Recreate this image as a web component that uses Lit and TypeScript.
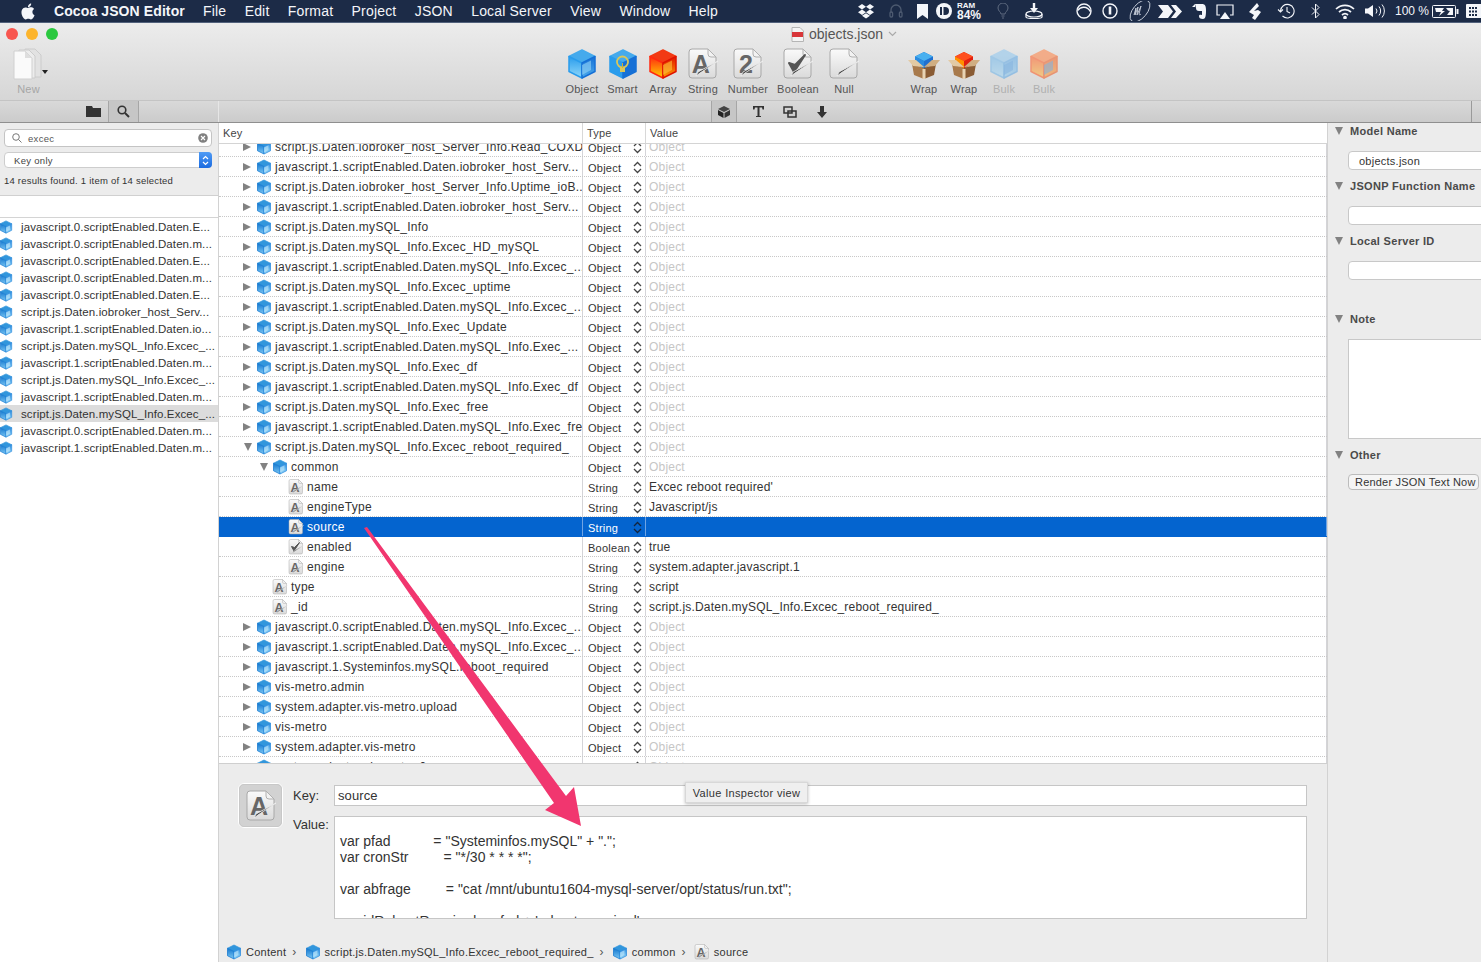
import { LitElement, html, css, svg } from "lit";
import { customElement } from "lit/decorators.js";

let uid = 0;
function cube(size: number, top = "#45aaec", left = "#2a9cec", leftB = "#8fd8fa", right = "#1670d6", rightB = "#4cabec", inner = "#9fdcfa") {
  const id = "c" + uid++;
  return html`<svg class="ic" width=${size} height=${size} viewBox="0 0 32 32">
    <defs>
      <linearGradient id="${id}l" x1="0" y1="0" x2="0" y2="1"><stop offset="0" stop-color=${left}/><stop offset="1" stop-color=${leftB}/></linearGradient>
      <linearGradient id="${id}r" x1="0" y1="0" x2="0" y2="1"><stop offset="0" stop-color=${right}/><stop offset="1" stop-color=${rightB}/></linearGradient>
    </defs>
    <g stroke-linejoin="round" stroke-width="1.500">
      <polygon points="16,2 29,8.500 16,15 3,8.500" fill=${top} stroke=${top}/>
      <polygon points="3,8.500 16,15 16,30 3,23.500" fill="url(#${id}l)" stroke=${left}/>
      <polygon points="29,8.500 16,15 16,30 29,23.500" fill="url(#${id}r)" stroke=${right}/>
    </g>
    <polygon points="16,17 25,12.500 25,22 16,27" fill=${inner} opacity=".55"/>
  </svg>`;
}
const rowCube = () => cube(16, "#3196dc", "#1377cf", "#7cc8f4", "#2a8ade", "#9adcfa", "#d2f2ff");

function docIcon(size: number, glyph: string, pen = true) {
  const id = "d" + uid++;
  return html`<svg class="ic" width=${size} height=${size} viewBox="0 0 32 32">
    <defs><linearGradient id=${id} x1="0" y1="0" x2="0" y2="1"><stop offset="0" stop-color="#fafafa"/><stop offset="1" stop-color="#dadada"/></linearGradient></defs>
    <path d="M5 1h16l8 8v18a3 3 0 0 1-3 3H5a3 3 0 0 1-3-3V4a3 3 0 0 1 3-3z" fill="url(#${id})" stroke="#a8a8a8" stroke-width="1"/>
    <path d="M21 1v5a3 3 0 0 0 3 3h5z" fill="#f2f2f2" stroke="#b0b0b0" stroke-width="1"/>
    ${glyph === "check"
      ? svg`<path d="M7 15l5 9 11-17-10 10z" fill="#555" stroke="#555" stroke-width="2" stroke-linejoin="round"/>`
      : glyph
      ? svg`<text x="14" y="25" text-anchor="middle" font-family="Liberation Sans, sans-serif" font-weight="700" font-size="25" fill="#666">${glyph}</text>`
      : ""}
    ${pen ? svg`<path d="M31 13L13 25l-4 3 2-4z" fill="#3c3c3c" stroke="#f2f2f2" stroke-width=".8"/>` : ""}
  </svg>`;
}

function boxIcon(top: string, side1: string, side2: string) {
  return html`<svg class="ic" width="32" height="32" viewBox="0 0 32 32">
    <polygon points="16,4 25,8.500 25,16 16,20.500 7,16 7,8.500" fill=${side2}/>
    <polygon points="16,4 25,8.500 16,13 7,8.500" fill=${top}/>
    <polygon points="7,8.500 16,13 16,20.500 7,16" fill=${side1}/>
    <polygon points="4,16 16,20 16,31 6,27" fill="#a87a4c"/>
    <polygon points="28,16 16,20 16,31 26,27" fill="#8a5c34"/>
    <polygon points="0,12 8,12 16,19 5,18" fill="#e2caa4"/>
    <polygon points="32,12 24,12 16,19 27,18" fill="#d0ae82"/>
    <rect x="14.500" y="21" width="3" height="10" fill="#e8d4b4"/>
  </svg>`;
}

const w = "#f4f6fa";
const mi = {
  dropbox: html`<svg width="16" height="15" viewBox="0 0 16 15" fill=${w}><path d="M4 0L0 2.800l4 2.700 4-2.700zM12 0L8 2.800l4 2.700 4-2.700zM0 8.200L4 11l4-2.800-4-2.700zM12 5.500L8 8.200l4 2.800 4-2.800zM4 11.800l4 2.800 4-2.800-4-2.600z"/></svg>`,
  phones: html`<svg width="14" height="16" viewBox="0 0 14 16" fill="none" stroke="#4d5a70" stroke-width="1.300"><path d="M2 10V7a5 5 0 0 1 10 0v3"/><rect x="1" y="9" width="2.600" height="5" rx="1"/><rect x="10.400" y="9" width="2.600" height="5" rx="1"/></svg>`,
  mark: html`<svg width="11" height="15" viewBox="0 0 11 15" fill=${w}><path d="M0 0h11v15l-5.500-4L0 15z"/></svg>`,
  circleD: html`<svg width="16" height="16" viewBox="0 0 16 16"><circle cx="8" cy="8" r="8" fill=${w}/><rect x="4" y="4" width="2" height="8" fill="#1c2b47"/><path d="M7.500 4H9a4 4 0 0 1 0 8H7.500z" fill="#1c2b47"/></svg>`,
  bulb: html`<svg width="12" height="16" viewBox="0 0 12 16" fill="none" stroke="#5f6b80"><path d="M4 11c0-2-3-3-3-6a5 5 0 0 1 10 0c0 3-3 4-3 6z"/><path d="M4.500 13h3M5 15h2"/></svg>`,
  tray: html`<svg width="18" height="18" viewBox="0 0 18 18" fill="none" stroke=${w} stroke-width="1.200"><path d="M9 1v7" stroke-width="2.400"/><path d="M5 6h8l-4 5z" fill=${w} stroke="none"/><ellipse cx="9" cy="12" rx="8" ry="3"/><path d="M1 12v3c0 2 16 2 16 0v-3"/></svg>`,
  circ: html`<svg width="16" height="16" viewBox="0 0 16 16" fill="none" stroke=${w} stroke-width="1.400"><circle cx="8" cy="8" r="7"/><path d="M1.500 7.500C5 3 11 3 14.500 8.500"/></svg>`,
  circI: html`<svg width="16" height="16" viewBox="0 0 16 16" fill="none" stroke=${w} stroke-width="1.400"><circle cx="8" cy="8" r="7"/><path d="M8 3.500v8" stroke-width="2.600"/></svg>`,
  m: html`<svg width="26" height="20" viewBox="0 0 26 20" fill="none" stroke="#c8cfdb" stroke-width=".9"><ellipse cx="13" cy="10" rx="13" ry="7" transform="rotate(-50 13 10)"/><path d="M7 14l2-7-1 7 3-8-1 8 4-9-2 8c0 1 1 1 2 0"/></svg>`,
  arrows: html`<svg width="24" height="13" viewBox="0 0 24 13" fill=${w}><path d="M0 0h10l5 6.500-5 6.500H0l5-6.500zM13 0h5l6 6.500-6 6.500h-5l5-6.500z"/></svg>`,
  ever: html`<svg width="14" height="17" viewBox="0 0 14 17" fill=${w}><path d="M3 1h7c3 0 4 2 4 6s0 9-3 9-4-1-4-3 3-1 3-1V8H7c-2 0-3-1-3-3zM0 4l3-3v3z"/></svg>`,
  airplay: html`<svg width="18" height="15" viewBox="0 0 18 15" fill="none" stroke=${w} stroke-width="1.200"><path d="M4 11H1V1h16v10h-3"/><path d="M9 8l5 7H4z" fill=${w} stroke="none"/></svg>`,
  leaf: html`<svg width="12" height="17" viewBox="0 0 12 17" fill=${w}><path d="M8 0l2 3-5 5 4-1 3 2-6 8-3-2 2-3-5-3z"/></svg>`,
  clock: html`<svg width="18" height="16" viewBox="0 0 18 16" fill="none" stroke=${w} stroke-width="1.100"><path d="M3.500 8a6.800 6.800 0 1 1 2 5"/><path d="M10 4v4.500l3 1.500M1 6.500l2.500 2.500L6 6.500"/></svg>`,
  bt: html`<svg width="9" height="16" viewBox="0 0 9 16" fill="none" stroke=${w} stroke-width="1"><path d="M1 4.500l7 7-3.500 3.500V1L8 4.500l-7 7"/></svg>`,
  wifi: html`<svg width="20" height="15" viewBox="0 0 20 15" fill="none" stroke=${w} stroke-width="1.700"><path d="M1 5a13 13 0 0 1 18 0M4 8a9 9 0 0 1 12 0M7 11a4.500 4.500 0 0 1 6 0"/><circle cx="10" cy="13.500" r="1" fill=${w}/></svg>`,
  vol: html`<svg width="21" height="14" viewBox="0 0 21 14" fill="none" stroke=${w} stroke-width="1"><path d="M0 4.500h3L8 1v12L3 9.500H0z" fill=${w} stroke="none"/><path d="M11 4.500a4 4 0 0 1 0 5M14 2.500a7 7 0 0 1 0 9M17 .5a10 10 0 0 1 0 13"/></svg>`,
  batt: html`<svg width="27" height="13" viewBox="0 0 27 13" fill="none" stroke=${w}><rect x=".5" y=".5" width="23" height="12" rx="1"/><rect x="24.500" y="4" width="2" height="5" fill=${w} stroke="none"/><path d="M3 3h9l-2 3h3l-6 5 2-4H4zM14 3h7v7h-6l3-4-2-.5z" fill=${w} stroke="none"/></svg>`,
  grid: html`<svg width="15" height="14" viewBox="0 0 15 14" fill=${w}><path d="M0 1a1 1 0 0 1 1-1h14v14H1a1 1 0 0 1-1-1zm3 2v2h2V3zm3 0v2h2V3zm3 0v2h2V3zM3 6.500v2h2v-2zm3 0v2h2v-2zm3 0v2h2v-2zM3 10v2h2v-2zm3 0v2h2v-2zm3 0v2h2v-2z" fill-rule="evenodd"/></svg>`,
};

const stepper = html`<svg class="step" width="9" height="13" viewBox="0 0 9 13" fill="none" stroke="currentColor" stroke-width="1.300"><path d="M1 5l3.500-3.500L8 5M1 8l3.500 3.500L8 8"/></svg>`;

interface Row { k: string; d: number; t: string; v: string; icon: string; tri?: string; sel?: boolean }
const obj = (k: string, tri = "tr", d = 0): Row => ({ k, d, t: "Object", v: "Object", icon: "o", tri });
const str = (k: string, v: string, d: number, sel = false): Row => ({ k, d, t: "String", v, icon: "A", sel });

const rows: Row[] = [
  obj("script.js.Daten.iobroker_host_Server_Info.Read_COXD"),
  obj("javascript.1.scriptEnabled.Daten.iobroker_host_Serv..."),
  obj("script.js.Daten.iobroker_host_Server_Info.Uptime_ioB..."),
  obj("javascript.1.scriptEnabled.Daten.iobroker_host_Serv..."),
  obj("script.js.Daten.mySQL_Info"),
  obj("script.js.Daten.mySQL_Info.Excec_HD_mySQL"),
  obj("javascript.1.scriptEnabled.Daten.mySQL_Info.Excec_..."),
  obj("script.js.Daten.mySQL_Info.Excec_uptime"),
  obj("javascript.1.scriptEnabled.Daten.mySQL_Info.Excec_..."),
  obj("script.js.Daten.mySQL_Info.Exec_Update"),
  obj("javascript.1.scriptEnabled.Daten.mySQL_Info.Exec_..."),
  obj("script.js.Daten.mySQL_Info.Exec_df"),
  obj("javascript.1.scriptEnabled.Daten.mySQL_Info.Exec_df"),
  obj("script.js.Daten.mySQL_Info.Exec_free"),
  obj("javascript.1.scriptEnabled.Daten.mySQL_Info.Exec_free"),
  obj("script.js.Daten.mySQL_Info.Excec_reboot_required_", "td"),
  obj("common", "td", 1),
  str("name", "Excec reboot required'", 2),
  str("engineType", "Javascript/js", 2),
  str("source", "", 2, true),
  { k: "enabled", d: 2, t: "Boolean", v: "true", icon: "b" },
  str("engine", "system.adapter.javascript.1", 2),
  str("type", "script", 1),
  str("_id", "script.js.Daten.mySQL_Info.Excec_reboot_required_", 1),
  obj("javascript.0.scriptEnabled.Daten.mySQL_Info.Excec_..."),
  obj("javascript.1.scriptEnabled.Daten.mySQL_Info.Excec_..."),
  obj("javascript.1.Systeminfos.mySQL.reboot_required"),
  obj("vis-metro.admin"),
  obj("system.adapter.vis-metro.upload"),
  obj("vis-metro"),
  obj("system.adapter.vis-metro"),
  obj("system.adapter.vis-metro.0"),
];

const results = [
  "javascript.0.scriptEnabled.Daten.E...",
  "javascript.0.scriptEnabled.Daten.m...",
  "javascript.0.scriptEnabled.Daten.E...",
  "javascript.0.scriptEnabled.Daten.m...",
  "javascript.0.scriptEnabled.Daten.E...",
  "script.js.Daten.iobroker_host_Serv...",
  "javascript.1.scriptEnabled.Daten.io...",
  "script.js.Daten.mySQL_Info.Excec_...",
  "javascript.1.scriptEnabled.Daten.m...",
  "script.js.Daten.mySQL_Info.Excec_...",
  "javascript.1.scriptEnabled.Daten.m...",
  "script.js.Daten.mySQL_Info.Excec_...",
  "javascript.0.scriptEnabled.Daten.m...",
  "javascript.1.scriptEnabled.Daten.m...",
];

const menus = ["File", "Edit", "Format", "Project", "JSON", "Local Server", "View", "Window", "Help"];

const trayA: [number, any][] = [[30, mi.dropbox], [30, mi.phones], [22, mi.mark], [22, mi.circleD]];
const trayB: [number, any][] = [[26, mi.bulb], [36, mi.tray]];
const trayC: [number, any][] = [
  [18, mi.circ], [34, mi.circI], [26, mi.m], [34, mi.arrows], [24, mi.ever], [28, mi.airplay],
  [31, mi.leaf], [31, mi.clock], [28, mi.bt], [32, mi.wifi], [28, mi.vol],
];

@customElement("app-root")
export class AppRoot extends LitElement {
  static styles = css`
    :host { display: block; position: relative; width: 1481px; height: 962px; overflow: hidden;
      font-family: "Liberation Sans", Arial, sans-serif; font-size: 12px; color: #333; background: #ececec; }
    .ic { flex: none; display: block; }
    .menubar { height: 22px; background: #1c2b47; border-bottom: 1px solid #52627c; display: flex; align-items: center; color: #f4f6fa; font-size: 14px; letter-spacing: .17px; white-space: nowrap; }
    .apple { width: 16px; height: 17px; margin-left: 20px; fill: #f4f6fa; flex: none; }
    .appname { font-weight: 700; margin-left: 18px; margin-right: 18px; width: 131px; letter-spacing: .1px; flex: none; }
    .menus { display: flex; gap: 18.400px; }
    .tray { margin-left: auto; display: flex; align-items: center; height: 22px; letter-spacing: 0; }
    .cell { display: flex; align-items: center; justify-content: center; flex: none; }
    .ram { width: 33px; font-weight: 700; font-size: 12px; margin-left: 2px; display: flex; flex-direction: column; flex: none; }
    .ram small { font-size: 8px; line-height: 8px; display: block; }
    .ram b { line-height: 10px; display: block; }
    .pct { font-size: 12px; width: 36px; text-align: center; margin-left: 5px; flex: none; }
    .spacer2 { width: 23px; flex: none; }
    .gridcell { width: 15px; margin-left: 6px; }

    .toolbar { height: 77px; background: linear-gradient(#ececec, #d6d6d6); display: flex; flex-direction: column; position: relative; }
    .lights { display: flex; gap: 8px; padding: 5px 0 0 6px; height: 12px; }
    .lights i { width: 12px; height: 12px; border-radius: 50%; }
    .lr { background: #f8564f; } .ly { background: #fcb42c; } .lg { background: #2ac83f; }
    .title { position: absolute; left: 0; right: 0; top: 3px; display: flex; justify-content: center; align-items: center; gap: 5px; font-size: 14px; color: #555; padding-left: 207px; height: 16px; }
    .tools { display: flex; align-items: flex-start; padding-top: 8px; }
    .new { width: 57px; display: flex; flex-direction: column; align-items: center; color: #a6a6a6; font-size: 11px; letter-spacing: .2px; position: relative; flex: none; }
    .new span { margin-top: 3px; height: 13px; line-height: 13px; }
    .caret { position: absolute; left: 42px; top: 22px; border: 3px solid transparent; border-top: 4px solid #222; }
    .gap1 { width: 505px; flex: none; }
    .gap2 { width: 39px; flex: none; }
    .tool { display: flex; flex-direction: column; align-items: center; flex: none; font-size: 11px; color: #555; letter-spacing: .2px; }
    .tool span { margin-top: 3px; height: 13px; line-height: 13px; white-space: nowrap; }
    .tool.off { color: #b0b0b0; }
    .tool.off .ic { opacity: .55; }

    .tabs { height: 23px; background: linear-gradient(#d9d9d9, #cbcbcb); border-top: 1px solid #c4c4c4; border-bottom: 1px solid #8f8f8f; box-sizing: border-box; display: flex; }
    .tabL { width: 219px; box-sizing: border-box; border-right: 1px solid #e6e6e6; display: flex; justify-content: flex-end; padding-right: 79px; }
    .tabC { flex: 1; display: flex; padding-left: 492px; }
    .tabR { width: 9px; border-left: 1px solid #9a9a9a; }
    .tb { display: flex; align-items: center; justify-content: center; height: 21px; box-sizing: border-box; flex: none; }
    .tb.sepb { border-left: 1px solid #a6a6a6; border-right: 1px solid #a6a6a6; background: #c6c6c6; }
    .tb.fold { width: 30px; }
    .tb.srch { width: 31px; }
    .tb.c1 { width: 26px; }
    .tb.c2 { width: 43px; }
    .tb.c3 { width: 19px; }
    .tb.c4 { width: 45px; }

    .main { display: flex; height: 839px; }
    .side { width: 219px; box-sizing: border-box; border-right: 1px solid #d2d2d2; background: #fff; flex: none; display: flex; flex-direction: column; }
    .filter { height: 73px; box-sizing: border-box; background: #ececec; border-bottom: 1px solid #d0d0d0; padding: 6px 6px 0 4px; display: flex; flex-direction: column; }
    .search { height: 18px; box-sizing: border-box; border: 1px solid #c4c4c4; border-radius: 4px; background: #fff; display: flex; align-items: center; padding: 0 3px 0 7px; font-size: 9.500px; letter-spacing: .3px; color: #555; }
    .search b { font-weight: 400; margin-left: 6px; flex: 1; }
    .popup { height: 16px; box-sizing: border-box; margin-top: 5px; border: 1px solid #cdcdcd; border-radius: 4px; background: #fff; display: flex; align-items: center; padding-left: 9px; font-size: 9.500px; letter-spacing: .3px; color: #444; position: relative; }
    .popup i { position: absolute; right: -1px; top: -1px; width: 13px; height: 16px; border-radius: 0 4px 4px 0; background: linear-gradient(#4f9bf5, #1b6be0); display: flex; align-items: center; justify-content: center; color: #fff; }
    .count { font-size: 9.500px; letter-spacing: .22px; margin: 7px 0 0 0; color: #333; white-space: nowrap; }
    .gapw { height: 22px; border-bottom: 1px solid #d4d4d4; box-sizing: border-box; }
    .res { height: 17px; display: flex; align-items: center; gap: 8px; font-size: 11.500px; letter-spacing: .1px; white-space: nowrap; color: #333; overflow: hidden; }
    .res .ic { margin-left: -1px; }
    .res.hl { background: #dcdcdc; }

    .center { flex: 1; display: flex; flex-direction: column; min-width: 0; }
    .thead { height: 21px; box-sizing: border-box; background: #fff; border-bottom: 1px solid #d4d4d4; display: grid; grid-template-columns: 364px 63px 1fr; font-size: 11px; letter-spacing: .2px; color: #444; position: relative; z-index: 1; flex: none; }
    .thead div { padding-left: 4px; display: flex; align-items: center; border-right: 1px solid #d8d8d8; }
    .thead .last { border: 0; }
    .tbody { height: 619px; overflow: hidden; background: #fff; flex: none; }
    .rowsw { margin-top: -7px; }
    .row { height: 20px; box-sizing: border-box; border-bottom: 1px dotted #c8c8c8; display: grid; grid-template-columns: 364px 63px 1fr; }
    .row > div { display: flex; align-items: center; border-right: 1px solid #d4d4d8; min-width: 0; white-space: nowrap; overflow: hidden; }
    .key { font-size: 12px; letter-spacing: .28px; gap: 3px; color: #333; }
    .indent { flex: none; display: flex; justify-content: flex-end; }
    .tr { width: 0; height: 0; flex: none; border-left: 8px solid #828282; border-top: 4.500px solid transparent; border-bottom: 4.500px solid transparent; margin-right: 2px; }
    .td { width: 0; height: 0; flex: none; border-top: 8px solid #828282; border-left: 4.500px solid transparent; border-right: 4.500px solid transparent; margin-right: 1px; }
    .type { font-size: 11px; letter-spacing: .25px; padding-left: 5px; padding-top: 2px; box-sizing: border-box; justify-content: space-between; padding-right: 3px; color: #333; }
    .step { color: #444; flex: none; margin-top: -1px; }
    .val { font-size: 12px; padding-left: 3px; color: #333; letter-spacing: .2px; }
    .val.dim { color: #c6c6c6; }
    .row.sel { background: #0464cf; border-bottom-color: #0464cf; }
    .row.sel .key, .row.sel .type { color: #fff; }
    .row.sel > div { border-right-color: #6fa4e4; }
    .row.sel .step { color: #12243e; }

    .detail { flex: 1; border-top: 1px solid #cfcfcf; background: #ececec; display: flex; flex-direction: column; padding: 19px 20px 0 19px; position: relative; min-height: 0; }
    .dgrid { display: flex; gap: 10px; }
    .well { width: 45px; height: 45px; box-sizing: border-box; border: 1px solid #fff; outline: 1px solid #c8c8c8; outline-offset: -2px; border-radius: 6px; background: #d2d2d2; display: flex; align-items: center; justify-content: center; flex: none; }
    .form { flex: 1; display: grid; grid-template-columns: 41px 1fr; row-gap: 10px; padding-top: 2px; }
    .lbl { font-size: 13px; color: #333; }
    .lk { align-self: center; }
    .lv { padding-top: 1px; }
    .ki { height: 21px; box-sizing: border-box; border: 1px solid #c6c6c6; background: #fff; padding-left: 3px; display: flex; align-items: center; font-size: 13px; letter-spacing: .1px; }
    .vi { height: 103px; box-sizing: border-box; border: 1px solid #c6c6c6; background: #fff; padding: 16px 0 0 5px; overflow: hidden; font-size: 14px; line-height: 16px; white-space: pre; }
    .tip { position: absolute; left: 466px; top: 18px; width: 123px; height: 21px; box-sizing: border-box; background: #efefef; border: 1px solid #d8d8d8; box-shadow: 0 1px 3px rgba(0,0,0,.25); font-size: 11px; letter-spacing: .35px; display: flex; align-items: center; justify-content: center; color: #333; }
    .crumbs { margin-top: 25px; margin-left: -12px; display: flex; align-items: center; font-size: 11px; letter-spacing: .25px; height: 16px; white-space: nowrap; }
    .crumbs span { margin-left: 4px; }
    .crumbs em { font-style: normal; color: #555; margin: 0 8px 0 6px; font-size: 12px; }

    .right { width: 154px; flex: none; border-left: 1px solid #d2d2d2; box-sizing: border-box; background: #ececec; padding: 0 0 0 7px; display: flex; flex-direction: column; overflow: hidden; }
    .sec { display: flex; align-items: center; gap: 7px; font-weight: 700; font-size: 11px; color: #4a4a4a; height: 16px; white-space: nowrap; letter-spacing: .3px; flex: none; }
    .sec i { border-top: 8px solid #828282; border-left: 4.500px solid transparent; border-right: 4.500px solid transparent; flex: none; }
    .field { height: 19px; box-sizing: border-box; width: 150px; margin-left: 13px; border: 1px solid #c8c8c8; border-radius: 4px 0 0 4px; background: #fff; padding-left: 10px; display: flex; align-items: center; font-size: 11px; letter-spacing: .25px; flex: none; }
    .note { height: 100px; box-sizing: border-box; width: 150px; margin-left: 13px; border: 1px solid #c8c8c8; background: #fff; flex: none; }
    .btn { height: 16px; box-sizing: border-box; width: 131px; margin-left: 13px; border: 1px solid #bcbcbc; border-radius: 4px; background: #f5f5f5; font-size: 11px; letter-spacing: .2px; padding-left: 6px; display: flex; align-items: center; white-space: nowrap; flex: none; color: #333; }
    .m12 { margin-top: 12px; } .m11 { margin-top: 11px; } .m8 { margin-top: 8px; } .m31 { margin-top: 31px; }

    .arrow { position: absolute; left: 0; top: 0; pointer-events: none; }
  `;

  private renderRow(r: Row) {
    const icon = r.icon === "o" ? rowCube()
      : r.icon === "A" ? docIcon(16, "A") : docIcon(16, "check");
    const indent = 34 + r.d * 16;
    return html`<div class="row ${r.sel ? "sel" : ""}">
      <div class="key"><span class="indent" style="width:${indent}px">${r.tri ? html`<span class=${r.tri}></span>` : ""}</span>${icon}<span>${r.k}</span></div>
      <div class="type"><span>${r.t}</span>${stepper}</div>
      <div class="val ${r.t === "Object" ? "dim" : ""}">${r.v}</div>
    </div>`;
  }

  private tc(list: [number, any][]) {
    return list.map(([wd, ic]) => html`<span class="cell" style="width:${wd}px">${ic}</span>`);
  }

  render() {
    const tools1: [number, any, string][] = [
      [40, cube(32), "Object"],
      [41, html`<svg class="ic" width="32" height="32" viewBox="0 0 32 32"><g stroke-linejoin="round" stroke-width="1.500"><polygon points="16,2 29,8.500 16,15 3,8.500" fill="#45aaec" stroke="#45aaec"/><polygon points="3,8.500 16,15 16,30 3,23.500" fill="#2a9cec" stroke="#2a9cec"/><polygon points="29,8.500 16,15 16,30 29,23.500" fill="#1670d6" stroke="#1670d6"/></g><circle cx="15.500" cy="14" r="5.500" fill="none" stroke="#d9c65a" stroke-width="1.800"/><path d="M13 20h5v4h-5z" fill="#d9c65a"/><path d="M15.500 15v5" stroke="#d0b030"/></svg>`, "Smart"],
      [40, cube(32, "#f23a14", "#ff2a10", "#ffd000", "#e01400", "#ffa000", "#ffd040"), "Array"],
      [40, docIcon(32, "A"), "String"],
      [50, docIcon(32, "2"), "Number"],
      [50, docIcon(32, "check"), "Boolean"],
      [42, docIcon(32, ""), "Null"],
    ];
    const tools2: [number, any, string, boolean][] = [
      [40, boxIcon("#49b0f0", "#2a8be0", "#2070d0"), "Wrap", false],
      [40, boxIcon("#ff5020", "#ff9000", "#e02010"), "Wrap", false],
      [40, cube(32, "#8cc6f0", "#6cb4ea", "#a4d8f6", "#5aa6e6", "#8ccaf2", "#3d8fe0"), "Bulk", true],
      [40, cube(32, "#ff8040", "#ff5a20", "#ffc040", "#f05a20", "#ffa030", "#2f8fe6"), "Bulk", true],
    ];
    return html`
      <div class="menubar">
        <svg class="apple" viewBox="0 0 24 24"><path d="M12.152 6.896c-.948 0-2.415-1.078-3.960-1.040-2.040.027-3.910 1.183-4.961 3.014-2.117 3.675-.546 9.103 1.519 12.090 1.013 1.454 2.208 3.090 3.792 3.039 1.520-.065 2.090-.987 3.935-.987 1.831 0 2.350.987 3.960.948 1.637-.026 2.676-1.480 3.676-2.948 1.156-1.688 1.636-3.325 1.662-3.415-.039-.013-3.182-1.221-3.220-4.857-.026-3.040 2.480-4.494 2.597-4.559-1.429-2.090-3.623-2.324-4.390-2.376-2-.156-3.675 1.090-4.610 1.090zM15.530 3.830c.843-1.012 1.400-2.427 1.245-3.830-1.207.052-2.662.805-3.532 1.818-.780.896-1.454 2.338-1.273 3.714 1.338.104 2.715-.688 3.559-1.701"/></svg>
        <span class="appname">Cocoa JSON Editor</span>
        <div class="menus">${menus.map((m) => html`<span>${m}</span>`)}</div>
        <div class="tray">
          ${this.tc(trayA)}
          <span class="ram"><small>RAM</small><b>84%</b></span>
          ${this.tc(trayB)}
          <span class="spacer2"></span>
          ${this.tc(trayC)}
          <span class="pct">100 %</span>
          <span class="cell" style="width:30px">${mi.batt}</span>
          <span class="cell gridcell">${mi.grid}</span>
        </div>
      </div>

      <div class="toolbar">
        <div class="lights"><i class="lr"></i><i class="ly"></i><i class="lg"></i></div>
        <div class="title">
          <svg width="13" height="15" viewBox="0 0 13 15"><path d="M1 .5h8l3.500 3.500v10.500H1z" fill="#f4f4f4" stroke="#b5b5b5"/><rect x="1" y="5" width="11" height="5" fill="#d8363a"/></svg>
          <span>objects.json</span>
          <svg width="9" height="6" viewBox="0 0 9 6" fill="none" stroke="#aaa" stroke-width="1.200"><path d="M1 1l3.500 3.500L8 1"/></svg>
        </div>
        <div class="tools">
          <div class="new">
            <svg class="ic" width="32" height="32" viewBox="0 0 32 32"><path d="M12 1h10l6 6v22H12z" fill="#e2e2e2" stroke="#ccc"/><path d="M6 2h10l6 6v22H6z" fill="#ececec" stroke="#ccc"/><path d="M1 3h11l7 7v21H1z" fill="#fafafa" stroke="#d0d0d0"/><path d="M12 3v7h7z" fill="#dedede"/></svg>
            <i class="caret"></i>
            <span>New</span>
          </div>
          <div class="gap1"></div>
          ${tools1.map(([wd, ic, t]) => html`<div class="tool" style="width:${wd}px">${ic}<span>${t}</span></div>`)}
          <div class="gap2"></div>
          ${tools2.map(([wd, ic, t, off]) => html`<div class="tool ${off ? "off" : ""}" style="width:${wd}px">${ic}<span>${t}</span></div>`)}
        </div>
      </div>

      <div class="tabs">
        <div class="tabL">
          <span class="tb fold"><svg width="15" height="11" viewBox="0 0 15 11" fill="#333"><path d="M0 0h6l1 2h8v9H0z"/></svg></span>
          <span class="tb sepb srch"><svg width="13" height="13" viewBox="0 0 13 13" fill="none" stroke="#333" stroke-width="1.600"><circle cx="5" cy="5" r="3.800"/><path d="M8 8l4 4" stroke-width="2"/></svg></span>
        </div>
        <div class="tabC">
          <span class="tb sepb c1"><svg width="14" height="14" viewBox="0 0 14 14"><polygon points="7,1 13,4 7,7 1,4" fill="#444"/><polygon points="1,5 6.500,8 6.500,13 1,10" fill="#222"/><polygon points="13,5 7.500,8 7.500,13 13,10" fill="#333"/></svg></span>
          <span class="tb c2"><svg width="13" height="13" viewBox="0 0 13 13" fill="#333"><path d="M1 1h11v3.500h-1.500l-.5-2H7.500v8.500H9v1H4v-1h1.500V2.500H3l-.5 2H1z"/></svg></span>
          <span class="tb c3"><svg width="14" height="12" viewBox="0 0 14 12" fill="none" stroke="#333" stroke-width="1.500"><rect x="1" y="1" width="8" height="6"/><rect x="5" y="5" width="8" height="6"/></svg></span>
          <span class="tb c4"><svg width="10" height="12" viewBox="0 0 10 12" fill="#333"><path d="M3 0h4v6h3l-5 6-5-6h3z"/></svg></span>
        </div>
        <div class="tabR"></div>
      </div>

      <div class="main">
        <div class="side">
          <div class="filter">
            <div class="search">
              <svg width="10" height="10" viewBox="0 0 10 10" fill="none" stroke="#777"><circle cx="4" cy="4" r="3.300"/><path d="M6.500 6.500L9.500 9.500"/></svg>
              <b>excec</b>
              <svg width="10" height="10" viewBox="0 0 10 10"><circle cx="5" cy="5" r="4.800" fill="#808080"/><path d="M3 3l4 4M7 3l-4 4" stroke="#fff" stroke-width="1.100"/></svg>
            </div>
            <div class="popup">Key only<i><svg width="7" height="11" viewBox="0 0 7 11" fill="none" stroke="#fff" stroke-width="1.200"><path d="M1 4l2.500-2.500L6 4M1 7l2.500 2.500L6 7"/></svg></i></div>
            <div class="count">14 results found. 1 item of 14 selected</div>
          </div>
          <div class="gapw"></div>
          ${results.map((t, i) => html`<div class="res ${i === 11 ? "hl" : ""}">${cube(14, "#3196dc", "#1377cf", "#7cc8f4", "#2a8ade", "#9adcfa", "#d2f2ff")}<span>${t}</span></div>`)}
        </div>

        <div class="center">
          <div class="thead"><div>Key</div><div>Type</div><div class="last">Value</div></div>
          <div class="tbody"><div class="rowsw">${rows.map((r) => this.renderRow(r))}</div></div>
          <div class="detail">
            <div class="dgrid">
              <div class="well">${docIcon(32, "A")}</div>
              <div class="form">
                <div class="lbl lk">Key:</div>
                <div class="ki">source</div>
                <div class="lbl lv">Value:</div>
                <div class="vi">var pfad           = "Systeminfos.mySQL" + ".";
var cronStr         = "*/30 * * * *";

var abfrage         = "cat /mnt/ubuntu1604-mysql-server/opt/status/run.txt";

var idRebootRequired = pfad + 'reboot_required';</div>
              </div>
            </div>
            <div class="tip">Value Inspector view</div>
            <div class="crumbs">
              ${rowCube()}<span>Content</span><em>›</em>
              ${rowCube()}<span>script.js.Daten.mySQL_Info.Excec_reboot_required_</span><em>›</em>
              ${rowCube()}<span>common</span><em>›</em>
              ${docIcon(16, "A")}<span>source</span>
            </div>
          </div>
        </div>

        <div class="right">
          <div class="sec"><i></i>Model Name</div>
          <div class="field m12">objects.json</div>
          <div class="sec m8"><i></i>JSONP Function Name</div>
          <div class="field m12"></div>
          <div class="sec m8"><i></i>Local Server ID</div>
          <div class="field m12"></div>
          <div class="sec m31"><i></i>Note</div>
          <div class="note m12"></div>
          <div class="sec m8"><i></i>Other</div>
          <div class="btn m11">Render JSON Text Now</div>
        </div>
      </div>

      <svg class="arrow" width="1481" height="962" viewBox="0 0 1481 962">
        <polygon points="364,528 367,527 566,796 574,787 581,826 545,810 554,803" fill="#f1366f"/>
      </svg>
    `;
  }
}
